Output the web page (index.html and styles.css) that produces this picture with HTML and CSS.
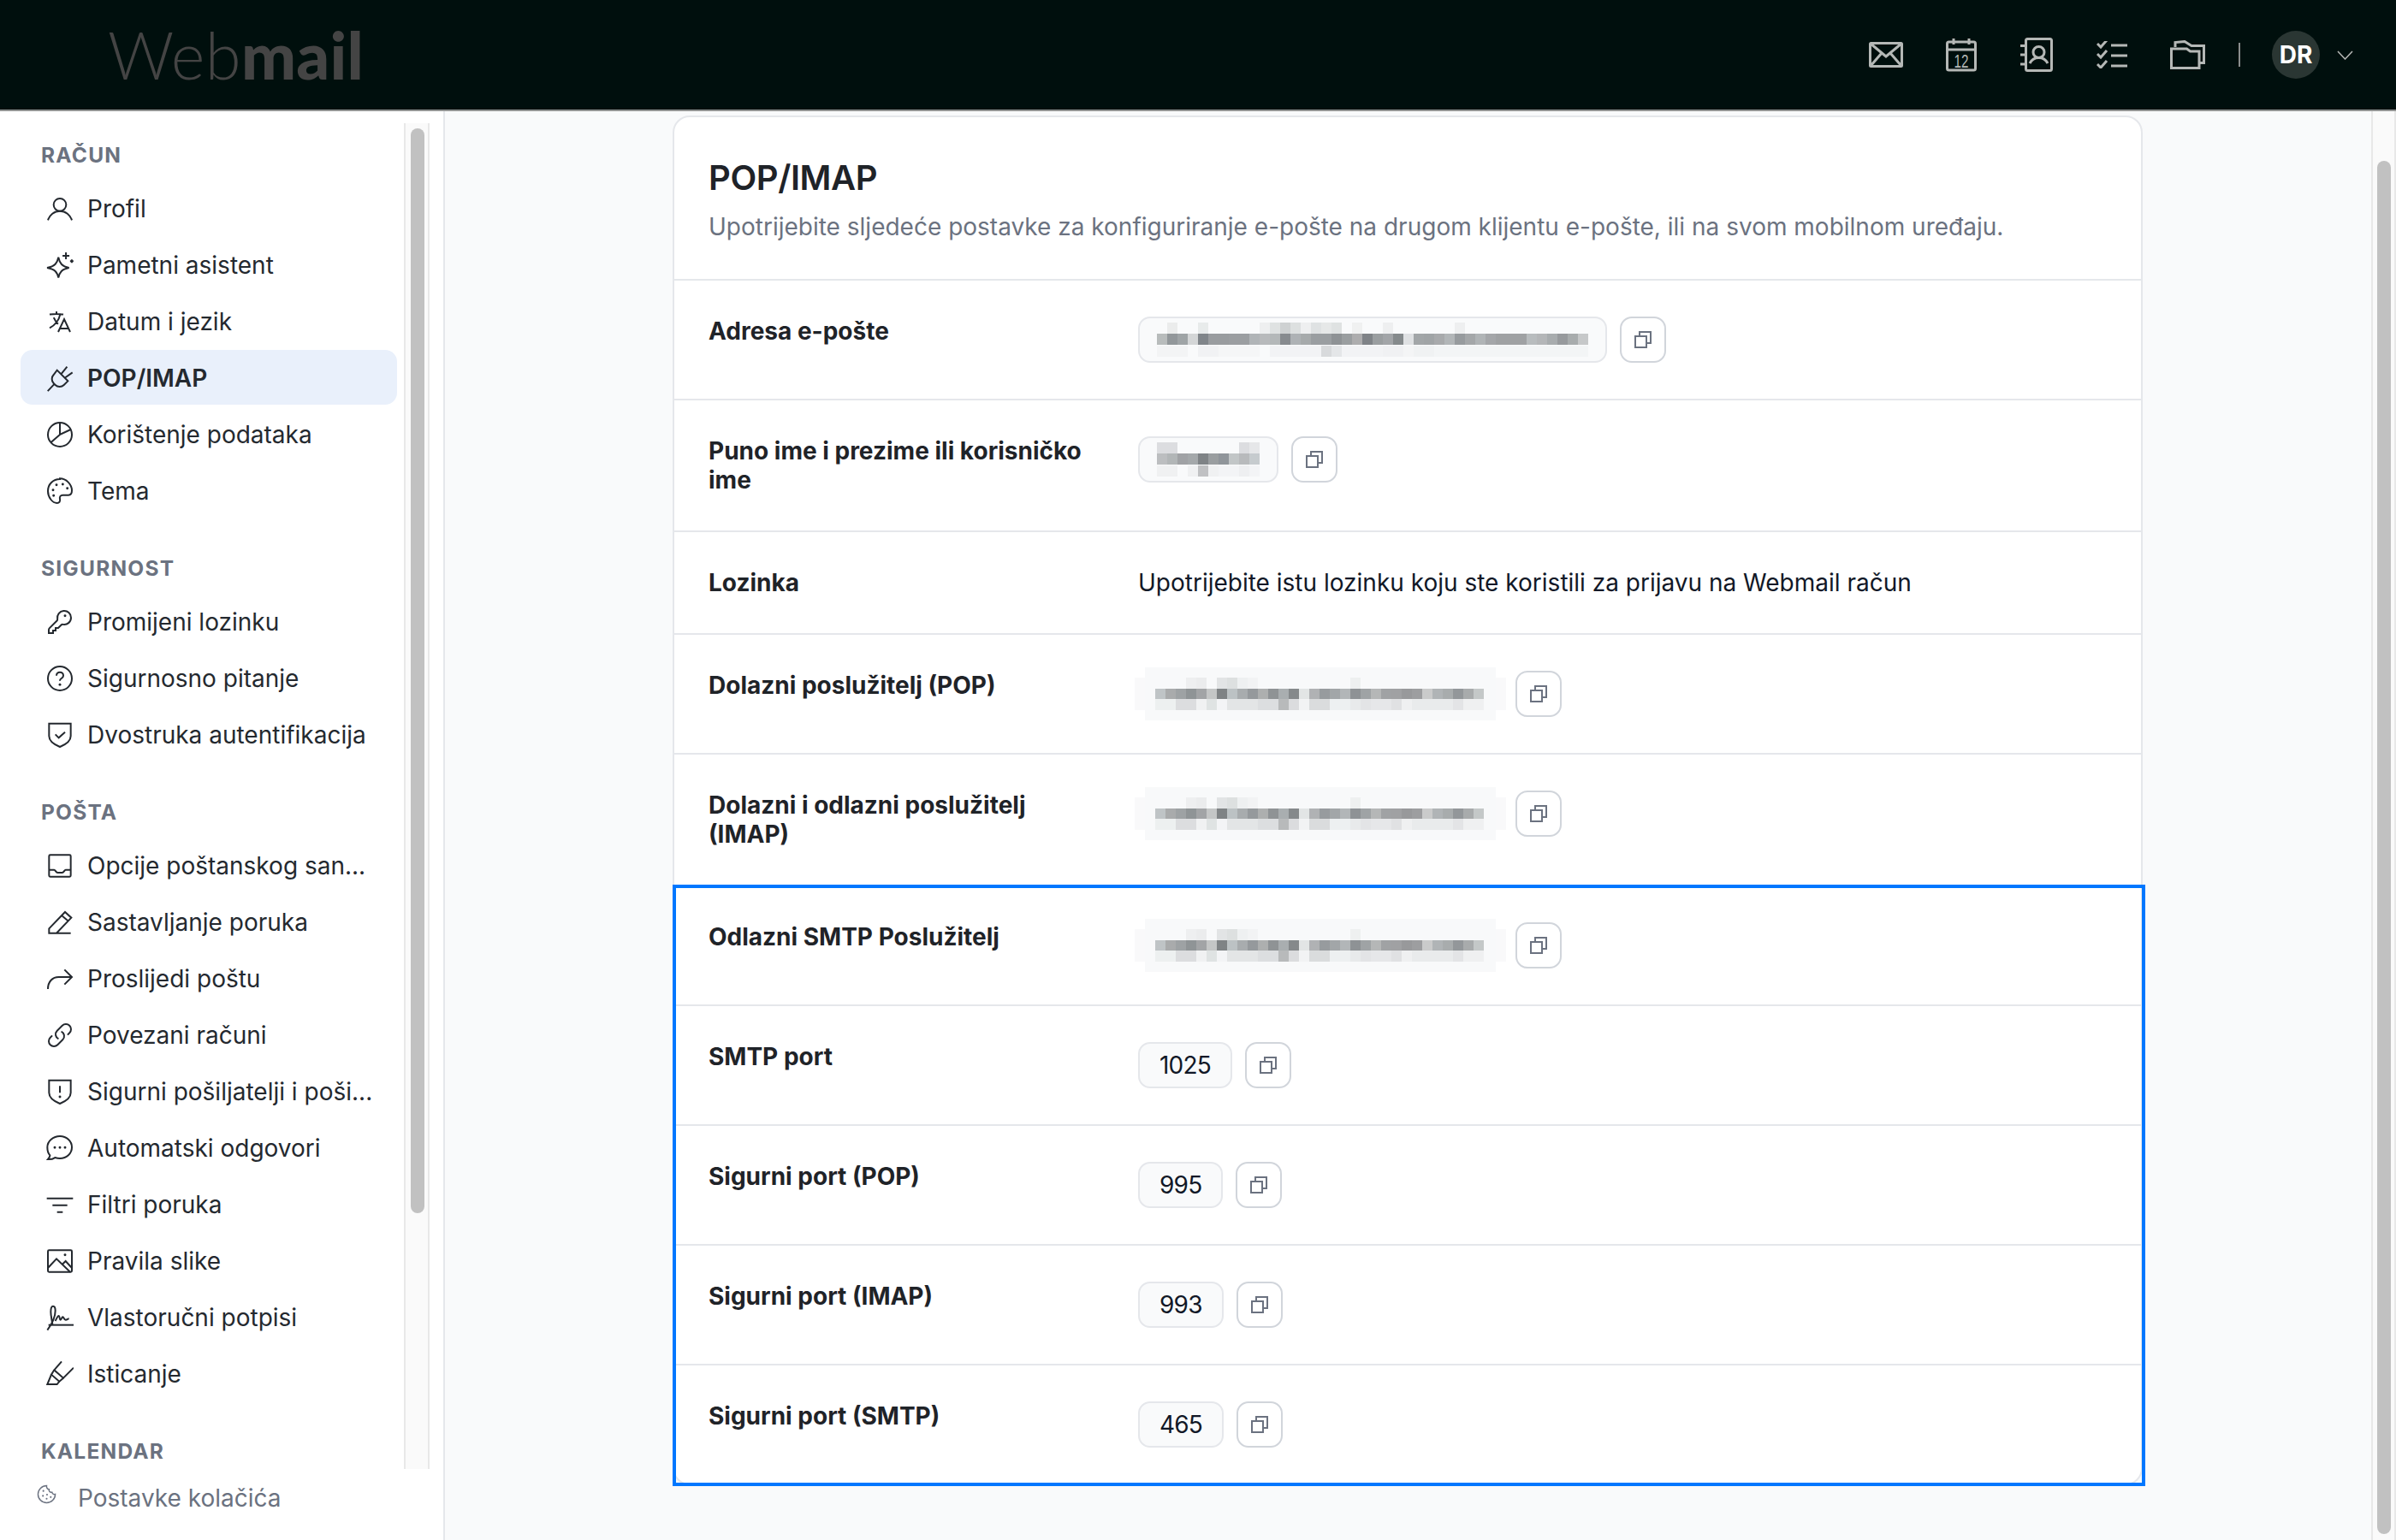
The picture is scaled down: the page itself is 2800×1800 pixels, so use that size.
FILE: index.html
```html
<!DOCTYPE html>
<html lang="hr">
<head>
    <meta charset="UTF-8">
    <meta name="viewport" content="width=device-width, initial-scale=1.0">
    <title>POP/IMAP - Webmail</title>
    <link rel="stylesheet" href="styles.css">
</head>
<body>
    <!-- mozaici preko privatnih podataka -->
    <svg class="defs" width="0" height="0">
        <symbol id="mosaic-server" viewBox="0 0 434 62">
            <rect x="12" y="0" width="410" height="62" fill="#f8f9fa"/>
            <rect x="0" y="12" width="12" height="38" fill="#f9f9fa"/>
            <rect x="422" y="12" width="12" height="38" fill="#f9f9fa"/>
            <g class="cells" transform="translate(24 12)">
                <rect x="36" fill="#eeeff0"/><rect x="48" fill="#ebeced"/><rect x="72" fill="#e2e4e5"/><rect x="84" fill="#dde0e0"/><rect x="96" fill="#eef0f1"/><rect x="108" fill="#f2f3f4"/><rect x="228" fill="#eef0f0"/>
            </g>
            <g class="cells" transform="translate(24 25)">
                <rect x="0" fill="#bfc4c6"/><rect x="12" fill="#a9abac"/><rect x="24" fill="#9ea2a4"/><rect x="36" fill="#8f9496"/><rect x="48" fill="#a2a4a6"/><rect x="60" fill="#c4c6c6"/><rect x="72" fill="#7f8385"/><rect x="84" fill="#bcc2c4"/><rect x="96" fill="#a8acae"/><rect x="108" fill="#95999c"/><rect x="120" fill="#adafaf"/><rect x="132" fill="#8f9395"/><rect x="144" fill="#a9aeb0"/><rect x="156" fill="#85898b"/><rect x="168" fill="#e2e5e5"/><rect x="180" fill="#b0b2b4"/><rect x="192" fill="#979b9e"/><rect x="204" fill="#a2a6a8"/><rect x="216" fill="#b2b6b8"/><rect x="228" fill="#8e9295"/><rect x="240" fill="#9fa3a5"/><rect x="252" fill="#b5b7b7"/><rect x="264" fill="#a0a2a4"/><rect x="276" fill="#a0a1a3"/><rect x="288" fill="#98999b"/><rect x="300" fill="#9d9ea0"/><rect x="312" fill="#cacbcb"/><rect x="324" fill="#b0b4b6"/><rect x="336" fill="#a8acad"/><rect x="348" fill="#93979a"/><rect x="360" fill="#a8abac"/><rect x="372" fill="#c4c8c8"/>
            </g>
            <g class="cells" transform="translate(24 37)">
                <rect x="0" fill="#edf0f0"/><rect x="12" fill="#edf0f0"/><rect x="24" fill="#dcdddf"/><rect x="36" fill="#dcdddf"/><rect x="48" fill="#f0f1f2"/><rect x="60" fill="#dfe3e3"/><rect x="72" fill="#f3f4f6"/><rect x="84" fill="#e3e5e6"/><rect x="96" fill="#e3e5e6"/><rect x="108" fill="#e3e5e6"/><rect x="120" fill="#dcdee0"/><rect x="132" fill="#dcdee0"/><rect x="144" fill="#b8babb"/><rect x="156" fill="#dbdcde"/><rect x="168" fill="#f2f3f4"/><rect x="180" fill="#dadcdd"/><rect x="192" fill="#dadcdd"/><rect x="204" fill="#edf0f1"/><rect x="216" fill="#edf0f1"/><rect x="228" fill="#e8eaeb"/><rect x="240" fill="#e3e4e6"/><rect x="252" fill="#e6e7e9"/><rect x="264" fill="#e6e7e9"/><rect x="276" fill="#e0e1e3"/><rect x="288" fill="#eff0f1"/><rect x="300" fill="#e9ebec"/><rect x="312" fill="#e9ebec"/><rect x="324" fill="#e9ebec"/><rect x="336" fill="#e9ebec"/><rect x="348" fill="#e3e4e6"/><rect x="360" fill="#eff0f1"/><rect x="372" fill="#eff0f1"/>
            </g>
        </symbol>
        <symbol id="copy" viewBox="0 0 20 20">
            <rect x="1" y="6" width="13" height="13" fill="none" stroke="currentColor" stroke-width="2"/>
            <path d="M6 6V1h13v13h-5" fill="none" stroke="currentColor" stroke-width="2"/>
        </symbol>
    </svg>

    <header class="topbar">
        <div class="logo"><span class="logo-thin">Web</span><span class="logo-bold">mail</span></div>
        <nav class="apps">
            <a class="app"><svg width="40" height="30" viewBox="0 0 40 30"><rect x="1.500" y="1.500" width="37" height="27" rx="1"/><path d="M2 2l18 15L38 2M2 28l13-15M38 28L25 13"/></svg></a>
            <a class="app"><svg width="36" height="40" viewBox="0 0 36 40"><rect x="1.500" y="5" width="33" height="33" rx="2"/><path d="M2 14h32M9 1v7M27 1v7"/><text class="cal-day" x="18" y="35" text-anchor="middle" textLength="17" lengthAdjust="spacingAndGlyphs">12</text></svg></a>
            <a class="app"><svg width="38" height="40" viewBox="0 0 38 40"><rect x="6.500" y="1.500" width="30" height="37" rx="2"/><path d="M0 9.500h6M0 20h6M0 31h6"/><circle cx="21.500" cy="17" r="6.500"/><path d="M11 30c2-4 6-6.500 10.500-6.500S30 26 32 30"/></svg></a>
            <a class="app"><svg width="36" height="32" viewBox="0 0 36 32"><path d="M1 5l4 4 7-8M1 17l4 4 7-8M1 29l4 4 7-8" transform="translate(0 -2)"/><path d="M17 5h19M17 17h19M17 29h19"/></svg></a>
            <a class="app"><svg width="41" height="34" viewBox="0 0 41 34"><path d="M1.500 32.500V10h18l4 3h10.500v19.500z"/><path d="M6 8V2.500l11-1 8 5h14.500v20H34"/></svg></a>
        </nav>
        <span class="sep"></span>
        <span class="avatar">DR</span>
        <svg class="caret" width="19" height="11" viewBox="0 0 19 11"><path d="M1 1l8.500 9L18 1"/></svg>
    </header>

    <div class="layout">
        <aside class="sidebar">
            <div class="side-scroll">
                <nav class="side-nav">
                    <div class="side-title">Račun</div>
                    <a class="side-item"><svg class="ico" viewBox="0 0 24 24"><circle cx="12" cy="8.500" r="5.500"/><path d="M1.500 22c1.500-4.500 5.500-8 10.500-8s9 3.500 10.500 8"/></svg><span>Profil</span></a>
                    <a class="side-item"><svg class="ico" viewBox="0 0 24 24"><path d="M10.700 5c1 5 3 8 9.300 9.300-6.300 1.200-8.300 3.700-9.300 8.700-1-5-3-7.500-9.900-8.700 6.900-1.300 8.900-4.300 9.900-9.300z"/><path d="M17.300 .8v6M14.300 3.800h6M22.400 7v3M20.900 8.500h3"/></svg><span>Pametni asistent</span></a>
                    <a class="side-item"><svg class="ico" viewBox="0 0 24 24"><path d="m10.500 21 5.250-11.250L21 21m-9-3h7.500M3 5.621a48.474 48.474 0 0 1 6-.371m0 0c1.120 0 2.233.038 3.334.114M9 5.250V3m3.334 2.364C11.176 10.658 7.690 15.080 3 17.502m9.334-12.138c.896.061 1.785.147 2.666.257m-4.589 8.495a18.023 18.023 0 0 1-3.827-5.802"/></svg><span>Datum i jezik</span></a>
                    <a class="side-item active"><svg class="ico" viewBox="0 0 24 24"><path d="M1.300 23.300l6.200-6.500M9.500 5l9.500 9.500-3.500 3.500c-2 2-5.500 2-7.500 0l-1.500-1.500c-2-2-2-5.500 0-7.500zM13 8.500L18.300 2M16 12l7-5"/></svg><span>POP/IMAP</span></a>
                    <a class="side-item"><svg class="ico" viewBox="0 0 24 24"><circle cx="12" cy="12" r="10.500"/><path d="M12 1.500V12l9.500-4.500M12 12l-8 7"/></svg><span>Korištenje podataka</span></a>
                    <a class="side-item"><svg class="ico" viewBox="0 0 24 24"><path d="M12 1.500C6 1.500 1.500 6 1.500 12c0 5.500 4 10.500 8 10.500 2 0 3-1.500 2.500-3.500-.5-2 .5-3.500 2.500-3.500h5c2 0 3-1.500 3-4 0-5.500-5-10.500-10.500-10.500z"/><path class="dot" d="M6 11h.01M9 6.500h.01M14.500 6h.01M18.500 9.500h.01M6.500 16h.01"/></svg><span>Tema</span></a>

                    <div class="side-title">Sigurnost</div>
                    <a class="side-item"><svg class="ico" viewBox="0 0 24 24"><path d="M21.750 8.250a6 6 0 0 1-7.029 5.912c-.563-.097-1.159.026-1.563.43L10.500 17.250H8.250v2.250H6v2.250H2.250v-2.818c0-.597.237-1.170.659-1.591l6.499-6.499c.404-.404.527-1 .43-1.563A6 6 0 1 1 21.750 8.250Z"/><path class="dot" d="M16.500 6.500h.01"/></svg><span>Promijeni lozinku</span></a>
                    <a class="side-item"><svg class="ico" viewBox="0 0 24 24"><circle cx="12" cy="12" r="10.500"/><path d="M9 9.500c0-1.700 1.300-3 3-3s3 1.300 3 3c0 1.500-1 2-2 2.700-.7.500-1 1-1 1.800"/><path class="dot" d="M12 17.500h.01"/></svg><span>Sigurnosno pitanje</span></a>
                    <a class="side-item"><svg class="ico" viewBox="0 0 24 24"><path d="M2.500 2h19v11c0 4.500-4.500 7.500-9.500 9.500-5-2-9.500-5-9.500-9.500z"/><path d="M8 11.500l3 3 5.500-5"/></svg><span>Dvostruka autentifikacija</span></a>

                    <div class="side-title">Pošta</div>
                    <a class="side-item"><svg class="ico" viewBox="0 0 24 24"><rect x="2.500" y="2.500" width="19" height="19" rx="1"/><path d="M2.500 15.500H7c1 0 1.500 2.500 3 2.500h4c1.500 0 2-2.500 3-2.500h4.500"/></svg><span>Opcije poštanskog san...</span></a>
                    <a class="side-item"><svg class="ico" viewBox="0 0 24 24"><path d="M2.500 21.500v-4L16.500 3l5.500 5L9 21.500zM13.500 6l6 5M2.500 21.500h19"/></svg><span>Sastavljanje poruka</span></a>
                    <a class="side-item"><svg class="ico" viewBox="0 0 24 24"><path d="M1.500 21c0-6.500 4-10.500 9.500-10.500h11M16 4l6.500 6.500L16 17"/></svg><span>Proslijedi poštu</span></a>
                    <a class="side-item"><svg class="ico" viewBox="0 0 24 24"><path d="M13.190 8.688a4.500 4.500 0 0 1 1.242 7.244l-4.500 4.500a4.500 4.500 0 0 1-6.364-6.364l1.757-1.757m13.350-.622 1.757-1.757a4.500 4.500 0 0 0-6.364-6.364l-4.500 4.500a4.500 4.500 0 0 0 1.242 7.244"/></svg><span>Povezani računi</span></a>
                    <a class="side-item"><svg class="ico" viewBox="0 0 24 24"><path d="M2.500 2h19v11c0 4.500-4.500 7.500-9.500 9.500-5-2-9.500-5-9.500-9.500z"/><path d="M12 7v6"/><path class="dot" d="M12 16.500h.01"/></svg><span>Sigurni pošiljatelji i poši...</span></a>
                    <a class="side-item"><svg class="ico" viewBox="0 0 24 24"><path d="M12 1.500c5.800 0 10.500 4.300 10.500 9.800S17.800 21 12 21c-1.500 0-3-.3-4.300-.7-1.500 1-3.700 1.700-6.200 1.500 1-1 1.700-2.200 1.800-3.500-1.800-1.800-2.300-4-2.300-7C1 5.800 6.200 1.500 12 1.500z"/><path class="dot" d="M7.500 11.500h.01M12 11.500h.01M16.500 11.500h.01"/></svg><span>Automatski odgovori</span></a>
                    <a class="side-item"><svg class="ico" viewBox="0 0 24 24"><path d="M.5 6.500h23M5.500 12.500h13M9.500 18.500h5"/></svg><span>Filtri poruka</span></a>
                    <a class="side-item"><svg class="ico" viewBox="0 0 24 24"><rect x="1.500" y="2.500" width="21" height="19" rx="1"/><path d="M1.500 18L9 10l12 11.500M14 15l3-3 5.500 6"/><path class="dot" d="M16.500 6.500h.01"/></svg><span>Pravila slike</span></a>
                    <a class="side-item"><svg class="ico" viewBox="0 0 24 24"><path d="M1 23c3-4 7-11 7-17 0-2.500-.7-4-2-4C4.500 2 4 4 4 7c0 4 1 7 1.500 11"/><path d="M8 15c1-2 2-4.500 3-4.500s.5 3.500 1.500 3.500 1-2.500 2-2.500 1 2.500 2.500 2.500 2-1 3-1"/><path d="M2 18.500h22"/></svg><span>Vlastoručni potpisi</span></a>
                    <a class="side-item"><svg class="ico" viewBox="0 0 24 24"><path d="M13.500 1L7 8.500l8 7 9-9"/><path d="M7 8.500l-2.500 4 7 6 3.500-3"/><path d="M4.500 12.500L1 21h8.500l2-2.500"/></svg><span>Isticanje</span></a>

                    <div class="side-title">Kalendar</div>
                </nav>
                <div class="track side-track"><div class="thumb side-thumb"></div></div>
            </div>
            <a class="cookies"><svg class="cookie-ico" viewBox="0 0 24 24"><path d="M12 1.500a10.500 10.500 0 1 0 10.500 10.500c-2 .5-3.500-.5-4-2.500-2.500.5-4-1-3.500-3.500-2 0-3.500-2-3-4.500z"/><path class="dot" d="M8 8h.01M7.500 14h.01M12.500 12.500h.01M12 17.500h.01M17 15.500h.01"/></svg><span>Postavke kolačića</span></a>
        </aside>

        <main class="main">
            <div class="content">
                <section class="card">
                    <div class="card-head">
                        <h1>POP/IMAP</h1>
                        <p>Upotrijebite sljedeće postavke za konfiguriranje e-pošte na drugom klijentu e-pošte, ili na svom mobilnom uređaju.</p>
                    </div>

                    <div class="row">
                        <div class="row-label">Adresa e-pošte</div>
                        <div class="row-value">
                            <div class="chip chip-mosaic">
                                <svg class="mosaic" width="506" height="40" viewBox="0 0 506 40">
                                    <g class="cells">
                                        <rect x="12" fill="#ebecec"/><rect x="48" fill="#e8ebeb"/><rect x="120" fill="#eeeff0"/><rect x="132" fill="#dfe2e2"/><rect x="144" fill="#ced1d2"/><rect x="156" fill="#dde0e0"/><rect x="168" fill="#eeeff0"/><rect x="180" fill="#dfe2e3"/><rect x="192" fill="#e6e8e8"/><rect x="204" fill="#dfe2e2"/><rect x="228" fill="#f0f1f1"/><rect x="264" fill="#eeeff0"/><rect x="348" fill="#eeeff0"/>
                                    </g>
                                    <g class="cells" transform="translate(0 13)">
                                        <rect x="0" fill="#b8bcbc"/><rect x="12" fill="#92979a"/><rect x="24" fill="#9fa4a6"/><rect x="36" fill="#d4d6d7"/><rect x="48" fill="#80858a"/><rect x="60" fill="#999c9f"/><rect x="72" fill="#999c9f"/><rect x="84" fill="#9b9ea1"/><rect x="96" fill="#9b9ea1"/><rect x="108" fill="#b0b4b7"/><rect x="120" fill="#b8babc"/><rect x="132" fill="#b4b8b9"/><rect x="144" fill="#878b8f"/><rect x="156" fill="#aeb2b5"/><rect x="168" fill="#a6aaab"/><rect x="180" fill="#9a9ea1"/><rect x="192" fill="#9a9ea1"/><rect x="204" fill="#8e9295"/><rect x="216" fill="#9a9ea0"/><rect x="228" fill="#adadae"/><rect x="240" fill="#7f8387"/><rect x="252" fill="#9a9ea0"/><rect x="264" fill="#a2a5a8"/><rect x="276" fill="#858a8c"/><rect x="288" fill="#dfe1e3"/><rect x="300" fill="#a2a6a8"/><rect x="312" fill="#a0a4a6"/><rect x="324" fill="#a8aaac"/><rect x="336" fill="#b2b6b8"/><rect x="348" fill="#979b9e"/><rect x="360" fill="#a4a7a9"/><rect x="372" fill="#b0b4b6"/><rect x="384" fill="#a4a6a9"/><rect x="396" fill="#9fa1a3"/><rect x="408" fill="#9fa1a3"/><rect x="420" fill="#9fa1a3"/><rect x="432" fill="#b8bcbe"/><rect x="444" fill="#b4b6b8"/><rect x="456" fill="#a8acae"/><rect x="468" fill="#979a9d"/><rect x="480" fill="#a8acad"/><rect x="492" fill="#c6c8c9"/>
                                    </g>
                                    <g class="cells" transform="translate(0 27)">
                                        <rect x="0" fill="#f3f4f5"/><rect x="12" fill="#f3f4f5"/><rect x="24" fill="#f3f4f5"/><rect x="48" fill="#f1f2f4"/><rect x="60" fill="#f1f2f4"/><rect x="72" fill="#f5f6f7"/><rect x="84" fill="#f5f6f7"/><rect x="96" fill="#f5f6f7"/><rect x="108" fill="#f5f6f7"/><rect x="132" fill="#f2f3f5"/><rect x="144" fill="#f2f3f5"/><rect x="156" fill="#f2f3f5"/><rect x="168" fill="#f2f3f5"/><rect x="180" fill="#f2f3f5"/><rect x="192" fill="#d8dadc"/><rect x="204" fill="#e4e6e8"/><rect x="216" fill="#f2f3f5"/><rect x="228" fill="#f2f3f5"/><rect x="240" fill="#f2f3f5"/><rect x="252" fill="#f2f3f5"/><rect x="264" fill="#f0f1f3"/><rect x="276" fill="#f0f1f3"/><rect x="288" fill="#f4f5f6"/><rect x="300" fill="#f0f2f3"/><rect x="312" fill="#f0f2f3"/><rect x="324" fill="#f3f5f6"/><rect x="336" fill="#f3f5f6"/><rect x="348" fill="#f3f5f6"/><rect x="360" fill="#f3f5f6"/><rect x="372" fill="#f3f5f6"/><rect x="384" fill="#f3f5f6"/><rect x="396" fill="#f3f5f6"/><rect x="408" fill="#f3f5f6"/><rect x="420" fill="#f3f5f6"/><rect x="432" fill="#f3f5f6"/><rect x="444" fill="#f3f5f6"/><rect x="456" fill="#f3f5f6"/><rect x="468" fill="#f3f5f6"/><rect x="480" fill="#f3f5f6"/><rect x="492" fill="#f3f5f6"/>
                                    </g>
                                </svg>
                            </div>
                            <button class="copy"><svg width="20" height="20"><use href="#copy"/></svg></button>
                        </div>
                    </div>

                    <div class="row">
                        <div class="row-label">Puno ime i prezime ili korisničko ime</div>
                        <div class="row-value">
                            <div class="chip chip-mosaic">
                                <svg class="mosaic" width="122" height="40" viewBox="0 0 122 40">
                                    <g class="cells"><rect x="0" fill="#dcdde0"/><rect x="12" fill="#dcdde0"/><rect x="96" fill="#dcdde0"/><rect x="108" fill="#e6e7e9"/></g>
                                    <g class="cells" transform="translate(0 13)"><rect x="0" fill="#bcbec0"/><rect x="12" fill="#b2b6b7"/><rect x="24" fill="#a0a2a5"/><rect x="36" fill="#a4a8aa"/><rect x="48" fill="#7f8386"/><rect x="60" fill="#9a9ea0"/><rect x="72" fill="#90959a"/><rect x="84" fill="#c2c6c7"/><rect x="96" fill="#b8babc"/><rect x="108" fill="#c6cbce"/></g>
                                    <g class="cells" transform="translate(0 27)"><rect x="0" fill="#f0f1f2"/><rect x="12" fill="#f0f1f2"/><rect x="36" fill="#f0f1f2"/><rect x="48" fill="#c0c1c3"/><rect x="60" fill="#f0f1f2"/><rect x="72" fill="#f3f4f6"/><rect x="84" fill="#f3f4f6"/><rect x="96" fill="#eeeff1"/><rect x="108" fill="#f3f4f6"/></g>
                                </svg>
                            </div>
                            <button class="copy"><svg width="20" height="20"><use href="#copy"/></svg></button>
                        </div>
                    </div>

                    <div class="row">
                        <div class="row-label">Lozinka</div>
                        <div class="row-text">Upotrijebite istu lozinku koju ste koristili za prijavu na Webmail račun</div>
                    </div>

                    <div class="row">
                        <div class="row-label">Dolazni poslužitelj (POP)</div>
                        <div class="row-value">
                            <svg class="mosaic-server" width="434" height="62"><use href="#mosaic-server"/></svg>
                            <button class="copy"><svg width="20" height="20"><use href="#copy"/></svg></button>
                        </div>
                    </div>

                    <div class="row">
                        <div class="row-label">Dolazni i odlazni poslužitelj (IMAP)</div>
                        <div class="row-value">
                            <svg class="mosaic-server" width="434" height="62"><use href="#mosaic-server"/></svg>
                            <button class="copy"><svg width="20" height="20"><use href="#copy"/></svg></button>
                        </div>
                    </div>

                    <div class="smtp-group">
                        <div class="row">
                            <div class="row-label">Odlazni SMTP Poslužitelj</div>
                            <div class="row-value">
                                <svg class="mosaic-server" width="434" height="62"><use href="#mosaic-server"/></svg>
                                <button class="copy"><svg width="20" height="20"><use href="#copy"/></svg></button>
                            </div>
                        </div>
                        <div class="row">
                            <div class="row-label">SMTP port</div>
                            <div class="row-value">
                                <div class="chip">1025</div>
                                <button class="copy"><svg width="20" height="20"><use href="#copy"/></svg></button>
                            </div>
                        </div>
                        <div class="row">
                            <div class="row-label">Sigurni port (POP)</div>
                            <div class="row-value">
                                <div class="chip">995</div>
                                <button class="copy"><svg width="20" height="20"><use href="#copy"/></svg></button>
                            </div>
                        </div>
                        <div class="row">
                            <div class="row-label">Sigurni port (IMAP)</div>
                            <div class="row-value">
                                <div class="chip">993</div>
                                <button class="copy"><svg width="20" height="20"><use href="#copy"/></svg></button>
                            </div>
                        </div>
                        <div class="row row-last">
                            <div class="row-label">Sigurni port (SMTP)</div>
                            <div class="row-value">
                                <div class="chip">465</div>
                                <button class="copy"><svg width="20" height="20"><use href="#copy"/></svg></button>
                            </div>
                        </div>
                        <div class="smtp-outline"></div>
                    </div>
                </section>
            </div>
            <div class="track main-track"><div class="thumb main-thumb"></div></div>
        </main>
    </div>
</body>
</html>
```

FILE: styles.css
```css
* {
    box-sizing: border-box;
}

html, body {
    height: 100%;
}

body {
    margin: 0;
    display: flex;
    flex-direction: column;
    overflow: hidden;
    font-family: Inter, "Liberation Sans", sans-serif;
    font-size: 28px;
    color: #111827;
    background-color: #f9fafb;
}

.defs {
    position: absolute;
}

/* Gornja traka */
.topbar {
    height: 130px;
    flex: none;
    display: flex;
    align-items: center;
    padding: 0 50px 0 126px;
    background-color: #000f0d;
    border-bottom: 2px solid #919392;
}

.logo {
    font-family: Lato, sans-serif;
    font-size: 76px;
    line-height: 1;
    letter-spacing: 0.3px;
    color: #444;
    margin-right: auto;
}

.logo-thin {
    font-weight: 300;
}

.logo-bold {
    font-weight: 900;
}

.apps {
    display: flex;
    align-items: center;
}

.app {
    width: 88px;
    display: flex;
    align-items: center;
    justify-content: center;
}

.app svg, .caret {
    fill: none;
    stroke: #b5b8b6;
    stroke-width: 3;
}

.cal-day {
    font-family: "Liberation Sans", sans-serif;
    font-size: 22px;
    fill: #b5b8b6;
    stroke: none;
}

.sep {
    width: 2px;
    height: 28px;
    margin-left: 16px;
    background-color: #8a8d8c;
}

.avatar {
    width: 56px;
    height: 56px;
    margin-left: 37px;
    border-radius: 50%;
    display: flex;
    align-items: center;
    justify-content: center;
    background-color: #2a3633;
    color: #fff;
    font-weight: 700;
    font-size: 28px;
}

.caret {
    margin-left: 20px;
    stroke-width: 1.5;
}

.layout {
    flex: 1;
    display: flex;
    min-height: 0;
}

/* Bocni izbornik */
.sidebar {
    width: 520px;
    flex: none;
    display: flex;
    flex-direction: column;
    background-color: #fff;
    border-right: 2px solid #e5e7eb;
}

.side-scroll {
    height: 1573px;
    margin-top: 14px;
    width: 502px;
    flex: none;
    display: flex;
    overflow: hidden;
}

.side-nav {
    width: 472px;
    flex: none;
    padding: 22px 8px 0 24px;
}

.side-title {
    margin: 44px 0 15px 24px;
    font-size: 24.5px;
    line-height: 30px;
    font-weight: 700;
    letter-spacing: 0.05em;
    text-transform: uppercase;
    color: #6b7280;
}

.side-title:first-child {
    margin-top: 0;
}

.side-item {
    height: 64px;
    margin-bottom: 2px;
    padding: 2px 22px 0 30px;
    display: flex;
    align-items: center;
    gap: 16px;
    border-radius: 14px;
    color: #24292f;
    white-space: nowrap;
}

.side-item.active {
    background-color: #e9f0fb;
    font-weight: 600;
}

.ico {
    width: 32px;
    height: 32px;
    flex: none;
    fill: none;
    stroke: currentColor;
    stroke-width: 1.5;
}

.ico .dot, .cookie-ico .dot {
    stroke-width: 2.2;
    stroke-linecap: round;
}

.cookies {
    flex: 1;
    display: flex;
    align-items: center;
    padding: 0 0 16px 43px;
    color: #6b7280;
}

.cookie-ico {
    width: 23px;
    height: 23px;
    margin: -8px 25px 0 0;
    fill: none;
    stroke: currentColor;
    stroke-width: 1.5;
}

/* Klizaci */
.track {
    flex: none;
    background-color: #fafafa;
    border-left: 2px solid #e8e8e8;
    border-right: 2px solid #e8e8e8;
}

.side-track {
    width: 30px;
    padding: 6px 6px 0;
}

.main-track {
    width: 29px;
    padding: 58px 4px 0 5px;
}

.thumb {
    width: 16px;
    border-radius: 8px;
    background-color: #c1c1c1;
}

.side-thumb {
    height: 1268px;
}

.main-thumb {
    height: 1605px;
}

/* Glavni sadrzaj */
.main {
    flex: 1;
    min-width: 0;
    display: flex;
}

.content {
    flex: 1;
    padding: 5px 0 0 266px;
}

.card {
    width: 1718px;
    background-color: #fff;
    border: 2px solid #e5e7eb;
    border-radius: 20px;
}

.card-head {
    padding: 47px 40px 44px;
    border-bottom: 2px solid #e5e7eb;
}

.card-head h1 {
    margin: 0 0 16px;
    font-size: 40px;
    line-height: 48px;
    font-weight: 600;
    color: #1f2328;
    letter-spacing: -0.01em;
}

.card-head p {
    margin: 0;
    line-height: 34px;
    color: #6b7280;
}

.row {
    display: grid;
    grid-template-columns: 450px 1fr;
    column-gap: 52px;
    padding: 42px 40px;
    border-bottom: 2px solid #e5e7eb;
}

.row-last {
    border-bottom: 0;
}

.row-label {
    font-weight: 700;
    line-height: 34px;
    color: #1f2328;
}

.row-text {
    line-height: 34px;
}

.row-value {
    display: flex;
    align-items: center;
    gap: 15px;
    height: 54px;
}

.chip {
    height: 54px;
    padding: 0 23px;
    display: flex;
    align-items: center;
    background-color: #f9fafb;
    border: 2px solid #e5e7eb;
    border-radius: 14px;
    letter-spacing: -0.8px;
}

.chip-mosaic {
    padding: 0 18px 0 20px;
}

.mosaic, .mosaic-server {
    display: block;
    flex: none;
    shape-rendering: crispEdges;
}

.mosaic-server {
    margin: -4px;
}

.cells rect {
    width: 12px;
    height: 13px;
}

.copy {
    width: 54px;
    height: 54px;
    padding: 0;
    display: flex;
    align-items: center;
    justify-content: center;
    flex: none;
    background-color: #fff;
    border: 2px solid #d1d5db;
    border-radius: 14px;
    color: #6b7280;
}

/* Plavi okvir oko SMTP redova */
.smtp-group {
    position: relative;
}

.smtp-outline {
    position: absolute;
    top: -2px;
    left: -2px;
    right: -5px;
    bottom: -3px;
    border: 4px solid #0077ff;
    pointer-events: none;
}
```
